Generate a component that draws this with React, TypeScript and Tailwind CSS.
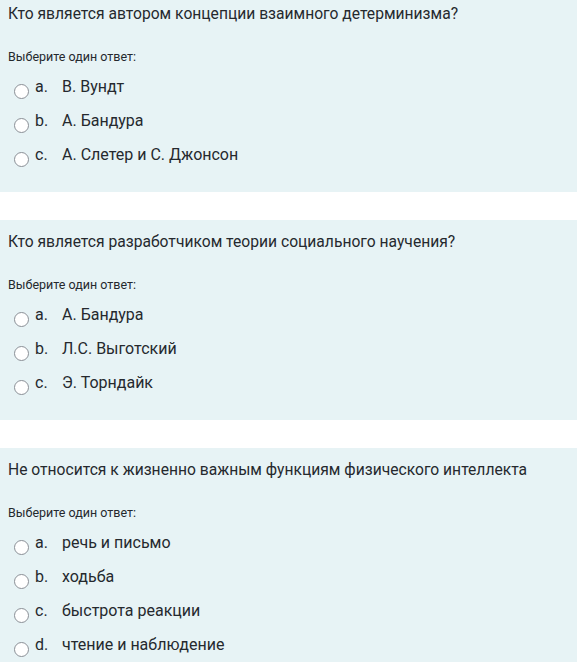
import React from "react";

type Q = { title: string; options: string[]; first?: boolean };

const questions: Q[] = [
  {
    title: "Кто является автором концепции взаимного детерминизма?",
    options: ["В. Вундт", "А. Бандура", "А. Слетер и С. Джонсон"],
    first: true,
  },
  {
    title: "Кто является разработчиком теории социального научения?",
    options: ["А. Бандура", "Л.С. Выготский", "Э. Торндайк"],
  },
  {
    title: "Не относится к жизненно важным функциям физического интеллекта",
    options: ["речь и письмо", "ходьба", "быстрота реакции", "чтение и наблюдение"],
  },
];

const letters = ["a.", "b.", "c.", "d."];

function Radio() {
  return (
    <span className="mt-[8px] mr-[6px] ml-[6px] inline-block h-[15px] w-[15px] shrink-0 rounded-full border border-[#8a8f96] bg-white" />
  );
}

function Question({ q }: { q: Q }) {
  return (
    <div
      className={`bg-[#e7f3f5] px-2 pb-[19px] ${q.first ? "pt-[2px]" : "pt-[10px]"}`}
    >
      <div className="text-[15.65px] leading-[24px] text-[#25292e]">{q.title}</div>
      <div className="mt-[22px] text-[12.5px] leading-[18px] text-[#25292e]">
        Выберите один ответ:
      </div>
      <div className="mt-[5px] flex flex-col">
        {q.options.map((o, i) => (
          <div key={i} className="flex h-[34px] items-start pt-[5px] text-[16px] leading-[22px] text-[#25292e]">
            <Radio />
            <span className="w-[27px] shrink-0">{letters[i]}</span>
            <span>{o}</span>
          </div>
        ))}
      </div>
    </div>
  );
}

export default function App() {
  return (
    <div
      className="flex w-[577px] flex-col gap-[28px] bg-white"
      style={{ fontFamily: "Roboto, 'Noto Sans', sans-serif" }}
    >
      {questions.map((q, i) => (
        <Question key={i} q={q} />
      ))}
    </div>
  );
}
